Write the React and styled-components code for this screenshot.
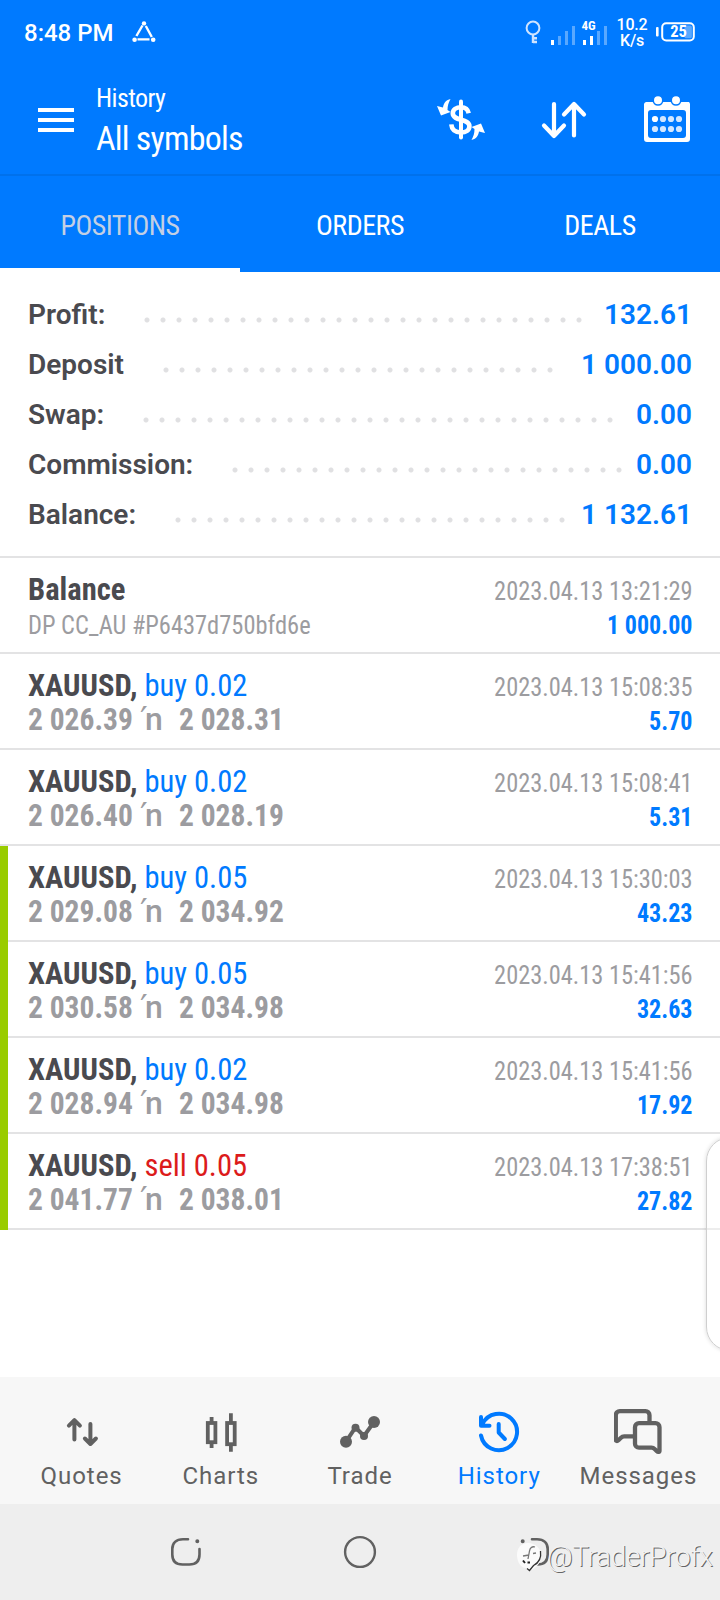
import React from 'react';
import styled, { createGlobalStyle } from 'styled-components';

const GlobalStyle = createGlobalStyle`
  * {
    box-sizing: border-box;
  }
  body {
    margin: 0;
    background: #fff;
    font-family: 'Roboto', sans-serif;
  }
`;

const condensed = "'Roboto Condensed', 'Roboto', sans-serif";

const Screen = styled.div`
  position: relative;
  display: flex;
  flex-direction: column;
  width: 720px;
  height: 1600px;
  overflow: hidden;
  background: #fff;
`;

const StatusBar = styled.div`
  display: flex;
  align-items: center;
  height: 64px;
  padding: 0 25px 0 24px;
  background: #007aff;
  color: #fff;
`;

const Clock = styled.div`
  width: 108px;
  font-size: 24px;
  font-weight: 500;
  line-height: 30px;
  white-space: nowrap;
  padding-top: 1px;
`;

const StatusIcons = styled.div`
  display: flex;
  align-items: center;
  margin-left: auto;
`;

const Speed = styled.div`
  width: 36px;
  margin: 1px 6px 0;
  font-size: 16px;
  font-weight: 500;
  line-height: 16px;
  letter-spacing: -0.2px;
  text-align: center;
`;

const Header = styled.header`
  display: flex;
  align-items: center;
  height: 112px;
  padding: 0 29px 0 38px;
  background: #007aff;
  border-bottom: 2px solid #0071ec;
  color: #fff;
`;

const Burger = styled.div`
  display: flex;
  flex-direction: column;
  gap: 6px;
  width: 36px;
  margin-top: 2px;

  span {
    height: 4px;
    background: #fff;
  }
`;

const Titles = styled.div`
  margin-left: 22px;
  font-family: ${condensed};
  white-space: nowrap;
`;

const Subtitle = styled.div`
  font-size: 26px;
  line-height: 34px;
  letter-spacing: -0.6px;
  margin-top: 4px;
`;

const Title = styled.div`
  font-size: 34px;
  line-height: 46px;
  letter-spacing: -0.8px;
`;

const Actions = styled.div`
  display: flex;
  gap: 55px;
  margin: 2px 0 0 auto;
`;

const Tabs = styled.nav`
  display: flex;
  height: 96px;
  background: #007aff;
`;

const Tab = styled.div`
  flex: 1;
  padding-top: 4px;
  border-bottom: 4px solid ${(p) => (p.$active ? '#fff' : '#007aff')};
  color: ${(p) => (p.$active ? '#c3cfe4' : '#fff')};
  font-family: ${condensed};
  font-size: 28px;
  line-height: 92px;
  letter-spacing: -0.5px;
  text-align: center;
`;

const Summary = styled.section`
  padding: 18px 28px 16px;
  border-bottom: 2px solid #e3e3e4;
`;

const SummaryRow = styled.div`
  display: flex;
  height: 50px;
  line-height: 50px;
  font-size: 28px;
  font-weight: 600;
  white-space: nowrap;
`;

const SummaryLabel = styled.div`
  color: #4a4a4f;
`;

const Dots = styled.div`
  width: ${(p) => p.$count * 16}px;
  height: 16px;
  margin: 22px 0 0 34px;
  background: radial-gradient(circle at 8px 8px, #e0e0e2 2px, transparent 3px) 0 0 / 16px 16px;
`;

const SummaryValue = styled.div`
  margin-left: auto;
  color: #007aff;
`;

const Marked = styled.div`
  border-left: 8px solid #99cc00;

  > div {
    padding-left: 20px;
  }
`;

const Deal = styled.div`
  display: flex;
  justify-content: space-between;
  height: 96px;
  padding: 13px 27px 0 28px;
  border-bottom: 2px solid #e3e3e4;
  font-family: ${condensed};
  white-space: nowrap;
`;

const DealName = styled.div`
  color: #4a4a4f;
  font-size: 32px;
  font-weight: 700;
  line-height: 36px;
  transform: scaleX(0.955);
  transform-origin: left;
`;

const Side = styled.span`
  color: ${(p) => (p.$sell ? '#dc1b1b' : '#007aff')};
  font-weight: 400;
`;

const Comment = styled.div`
  color: #9c9ca0;
  font-size: 26px;
  line-height: 36px;
  transform: scaleX(0.94);
  transform-origin: left;
`;

const Prices = styled.div`
  display: flex;
  color: #9c9ca0;
  font-size: 32px;
  font-weight: 700;
  line-height: 32px;
`;

const Price = styled.div`
  width: ${(p) => p.$width || 'auto'};
  transform: scaleX(0.922);
  transform-origin: left;
`;

const Arrow = styled.div`
  display: flex;
  width: 39px;
  font-family: 'Roboto', sans-serif;
  font-weight: 500;
`;

const Prime = styled.span`
  width: 5px;
  font-family: 'DejaVu Sans', sans-serif;
  font-size: 34px;
`;

const DealInfo = styled.div`
  padding-top: 2px;
  font-size: 26px;
  text-align: right;
`;

const Time = styled.div`
  color: #9c9ca0;
  line-height: 36px;
  transform: scaleX(0.938);
  transform-origin: right;
`;

const Amount = styled.div`
  color: #007aff;
  font-weight: 700;
  line-height: 32px;
  transform: scaleX(0.925);
  transform-origin: right;
`;

const SidePanel = styled.div`
  position: absolute;
  top: 1137px;
  right: -34px;
  width: 48px;
  height: 214px;
  border: 1px solid #cfcfcf;
  border-radius: 26px;
  background: rgba(255, 255, 255, 0.35);
  box-shadow: 0 0 4px rgba(0, 0, 0, 0.15);
`;

const BottomNav = styled.nav`
  display: flex;
  height: 127px;
  margin-top: auto;
  padding: 31px 12px 0;
  background: #f7f7f7;
`;

const NavItem = styled.div`
  display: flex;
  flex: 1;
  flex-direction: column;
  align-items: center;
  color: ${(p) => (p.$active ? '#007aff' : '#616161')};
  font-size: 24px;
  line-height: 30px;
  letter-spacing: 0.95px;

  svg {
    margin-bottom: 5px;
  }
`;

const SystemNav = styled.div`
  display: flex;
  justify-content: space-between;
  align-items: center;
  height: 96px;
  padding: 0 166px;
  background: #eee;
`;

const Watermark = styled.div`
  position: absolute;
  left: 514px;
  top: 1537px;
  display: flex;
  align-items: center;
  color: #f2f2f2;
  font-size: 28px;
  font-weight: 300;
  line-height: 40px;
  letter-spacing: -0.35px;
  text-shadow: 1px 1px 0 #666;

  svg {
    margin-right: -1px;
  }
`;

const summary = [
  { label: 'Profit:', value: '132.61', dots: 28 },
  { label: 'Deposit', value: '1 000.00', dots: 25 },
  { label: 'Swap:', value: '0.00', dots: 30 },
  { label: 'Commission:', value: '0.00', dots: 25 },
  { label: 'Balance:', value: '1 132.61', dots: 25 },
];

const deals = [
  { side: 'buy 0.02', open: '2 026.39', close: '2 028.31', time: '2023.04.13 15:08:35', profit: '5.70' },
  { side: 'buy 0.02', open: '2 026.40', close: '2 028.19', time: '2023.04.13 15:08:41', profit: '5.31' },
];

const takeProfitDeals = [
  { side: 'buy 0.05', open: '2 029.08', close: '2 034.92', time: '2023.04.13 15:30:03', profit: '43.23' },
  { side: 'buy 0.05', open: '2 030.58', close: '2 034.98', time: '2023.04.13 15:41:56', profit: '32.63' },
  { side: 'buy 0.02', open: '2 028.94', close: '2 034.98', time: '2023.04.13 15:41:56', profit: '17.92' },
  { side: 'sell 0.05', open: '2 041.77', close: '2 038.01', time: '2023.04.13 17:38:51', profit: '27.82' },
];

function DealRow({ deal }) {
  return (
    <Deal>
      <div>
        <DealName>
          XAUUSD, <Side $sell={deal.side.startsWith('sell')}>{deal.side}</Side>
        </DealName>
        <Prices>
          <Price $width="112px">{deal.open}</Price>
          <Arrow>
            <Prime>′</Prime>n
          </Arrow>
          <Price>{deal.close}</Price>
        </Prices>
      </div>
      <DealInfo>
        <Time>{deal.time}</Time>
        <Amount>{deal.profit}</Amount>
      </DealInfo>
    </Deal>
  );
}

const TriangleIcon = () => (
  <svg width="24" height="22" viewBox="0 0 24 22" fill="none" stroke="#fff" strokeWidth="2.4">
    <path d="M10.5 4.5 4.4 15M13.8 5l6 11M5.5 18.4h12" />
    <g fill="#fff" stroke="none">
      <circle cx="12" cy="2.4" r="2.2" />
      <circle cx="2.6" cy="18.8" r="2.3" />
      <circle cx="21.2" cy="18.8" r="2.3" />
    </g>
  </svg>
);

const KeyIcon = () => (
  <svg width="16" height="24" viewBox="0 0 16 24" fill="none" stroke="#cfe4ff" strokeWidth="2">
    <circle cx="8" cy="8" r="6.4" />
    <path d="M8 14.5V23M8 18.2h4M8 22h4" strokeWidth="2.4" />
  </svg>
);

const Signal = ({ level, network }) => (
  <svg width="25" height="28" viewBox="0 0 25 28" fill="#fff">
    <rect x="0" y="22" width="3" height="5" />
    <rect x="7" y="18" width="3" height="9" opacity={level > 1 ? 1 : 0.35} />
    <rect x="14" y="13" width="3" height="14" opacity="0.35" />
    <rect x="21" y="8" width="3" height="19" opacity="0.35" />
    {network && (
      <text x="-1.5" y="11.5" fontFamily="Roboto Condensed" fontSize="13" fontWeight="700">
        {network}
      </text>
    )}
  </svg>
);

const SignalSlot = styled.div`
  display: flex;
  margin-left: ${(p) => p.$gap};
  margin-bottom: 1px;

  svg {
    overflow: visible;
  }
`;

const BatteryIcon = () => (
  <svg width="39" height="20" viewBox="0 0 39 20" fill="none">
    <rect x="0" y="5" width="2.6" height="9.5" rx="1" fill="#fff" />
    <rect x="6.2" y="1.2" width="31.6" height="17.2" rx="4" stroke="#fff" strokeWidth="2" />
    <rect x="28.5" y="3.6" width="7.4" height="12.6" rx="1.5" fill="#5aa9ff" />
    <text x="22.5" y="15.4" fill="#fff" fontFamily="Roboto Condensed" fontSize="16.5" fontWeight="700" textAnchor="middle">
      25
    </text>
  </svg>
);

const DollarIcon = () => (
  <svg width="48" height="48" viewBox="0 0 48 48" fill="none" stroke="#fff" strokeWidth="4.6">
    <path d="M24 5.5v36" strokeWidth="4" strokeLinecap="round" />
    <path d="M31.7 17.2c-.8-4-4-6-7.700-6-4.600 0-8.200 2.300-8.200 6.100 0 8.300 16.600 4.700 16.600 12.900 0 4-3.600 6.200-8.400 6.200-5.500 0-9.200-2.600-9.700-8" />
    <g fill="#fff" stroke="none">
      <path d="M13.500 3c-4 .8-7 4-7.500 8.500L0 10l4 9.500 9.500-3.500-3-2c0-4 1-7.500 3-11z" />
      <path d="M34.500 44c4-.8 7-4 7.500-8.500l6 1.500-4-9.500-9.500 3.500 3 2c0 4-1 7.500-3 11z" />
    </g>
  </svg>
);

const SortIcon = () => (
  <svg width="48" height="48" viewBox="0 0 48 48" fill="none" stroke="#fff" strokeWidth="4.2" strokeLinecap="round" strokeLinejoin="round">
    <path d="M14 8v32M4 29.500l10 10.500 10-10.500" />
    <path d="M34 39.500V9M24 18.500 34 8 44 18.500" />
  </svg>
);

const CalendarIcon = () => (
  <svg width="48" height="48" viewBox="0 0 48 48">
    <path
      fill="#fff"
      fillRule="evenodd"
      d="M3 6h43a3 3 0 0 1 1 2v35a3 3 0 0 1-3 3H4a3 3 0 0 1-3-3V8a3 3 0 0 1 2-2zM8 14a3 3 0 0 0-3 3v22a3 3 0 0 0 3 3h32a3 3 0 0 0 3-3V17a3 3 0 0 0-3-3z"
    />
    <g fill="#fff" stroke="#007aff" strokeWidth="1.6">
      <circle cx="15" cy="4.2" r="4.8" />
      <circle cx="33" cy="4.2" r="4.8" />
    </g>
    {[23, 33].map((y) =>
      [12, 20, 28, 36].map((x) => (
        <circle key={`${x}-${y}`} cx={x} cy={y} r="3.1" fill={x === 12 && y === 23 ? '#fff' : '#d3e7ff'} />
      ))
    )}
  </svg>
);

const QuotesIcon = () => (
  <svg width="48" height="48" viewBox="0 0 48 48" fill="none" stroke="currentColor" strokeWidth="4" strokeLinecap="round" strokeLinejoin="round">
    <path d="M16.400 31.500V12.500M10.900 17.700l5.500-5.500 5.500 5.500" />
    <path d="M32.400 16v19.500M26.900 30.500l5.500 5.500 5.500-5.500" />
  </svg>
);

const ChartsIcon = () => (
  <svg width="48" height="48" viewBox="0 0 48 48" fill="none" stroke="currentColor" strokeWidth="3.8">
    <rect x="10.8" y="15" width="7.6" height="19.2" />
    <rect x="30.1" y="15" width="7.6" height="21.2" />
    <path d="M14.600 9v5M14.600 35v5M33.900 5.300V14M33.900 37v6.700" />
  </svg>
);

const TradeIcon = () => (
  <svg width="48" height="48" viewBox="0 0 48 48" fill="currentColor">
    <path d="M10 33.700 19.500 19.500 28 28 38 14" fill="none" stroke="currentColor" strokeWidth="4" />
    <circle cx="10" cy="33.7" r="6" />
    <circle cx="19.5" cy="19.8" r="4" />
    <circle cx="28" cy="28" r="4" />
    <circle cx="38" cy="14" r="6" />
  </svg>
);

const HistoryIcon = () => (
  <svg width="48" height="48" viewBox="0 0 48 48" fill="none" stroke="currentColor" strokeWidth="4" strokeLinecap="round" strokeLinejoin="round">
    <path d="M6 27.500a18.200 18.200 0 1 0 1.500-11.500" />
    <path d="M6 9v8.700h8.500" />
    <path d="M23.700 16v8.500l6.200 6.500" />
  </svg>
);

const MessagesIcon = () => (
  <svg width="48" height="48" viewBox="0 0 48 48" fill="none" stroke="currentColor" strokeWidth="4.3" strokeLinecap="round" strokeLinejoin="round">
    <path d="M35.500 14V7.200a4 4 0 0 0-4-4H5.800a4 4 0 0 0-4 4v24.600c0 1.500 1.500 1.500 2.600.4l2.300-2.300c1-1 2-1.600 3.500-1.600H20" />
    <path d="M26 15.200h15.500a4 4 0 0 1 4 4v23.500c0 1.500-1.600 1.600-2.600.6l-2-2c-1.100-1.100-2-1.600-3.400-1.600H25a4 4 0 0 1-4-4V19.200a4 4 0 0 1 4-4z" />
  </svg>
);

const SquareIcon = ({ mirrored }) => (
  <svg width="40" height="40" viewBox="0 0 40 40" fill="none" stroke="#616161" strokeWidth="2.6" strokeLinecap="round">
    <g transform={mirrored ? 'translate(40 0) scale(-1 1)' : undefined}>
      <path d="M22 7.300h-5C10 7.300 6.300 11 6.300 17v5.500c0 6.500 3.700 10 10.200 10h6.800c6.500 0 10.200-3.500 10.200-10V17" />
      <circle cx="31.3" cy="9.3" r="1" strokeWidth="2" fill="#616161" />
    </g>
  </svg>
);

const HomeIcon = () => (
  <svg width="40" height="40" viewBox="0 0 40 40" fill="none" stroke="#616161" strokeWidth="2.4">
    <circle cx="20" cy="20" r="14.9" />
  </svg>
);

const WatermarkLogo = () => (
  <svg width="34" height="40" viewBox="0 0 34 40" fill="none">
    <path d="M14 6C7 6 3 11 3 18s4 13 9 13l3 3c6-2 12-7 12-15 0-8-6-13-13-13z" fill="#fbfbfb" />
    <path d="M21 10c-3-1-5 1-5.500 4L14 22M9 19l6-1M19 16.500l3-.5" stroke="#777" strokeWidth="1.3" />
    <path d="M9 23.500l2 2.500M13.500 25.500h2.500" stroke="#222" strokeWidth="2" />
    <path d="M26.500 14c1 7-2 12-7 14.500l-4 5-2.500-2" stroke="#333" strokeWidth="1.3" />
  </svg>
);

const navItems = [
  { label: 'Quotes', Icon: QuotesIcon },
  { label: 'Charts', Icon: ChartsIcon },
  { label: 'Trade', Icon: TradeIcon },
  { label: 'History', Icon: HistoryIcon, active: true },
  { label: 'Messages', Icon: MessagesIcon },
];

function App() {
  return (
    <Screen>
      <GlobalStyle />
      <StatusBar>
        <Clock>8:48 PM</Clock>
        <TriangleIcon />
        <StatusIcons>
          <KeyIcon />
          <SignalSlot $gap="10px">
            <Signal level={1} />
          </SignalSlot>
          <SignalSlot $gap="7px">
            <Signal level={2} network="4G" />
          </SignalSlot>
          <Speed>
            10.2
            <br />
            K/s
          </Speed>
          <BatteryIcon />
        </StatusIcons>
      </StatusBar>

      <Header>
        <Burger>
          <span />
          <span />
          <span />
        </Burger>
        <Titles>
          <Subtitle>History</Subtitle>
          <Title>All symbols</Title>
        </Titles>
        <Actions>
          <DollarIcon />
          <SortIcon />
          <CalendarIcon />
        </Actions>
      </Header>

      <Tabs>
        <Tab $active>POSITIONS</Tab>
        <Tab>ORDERS</Tab>
        <Tab>DEALS</Tab>
      </Tabs>

      <Summary>
        {summary.map((row) => (
          <SummaryRow key={row.label}>
            <SummaryLabel>{row.label}</SummaryLabel>
            <Dots $count={row.dots} />
            <SummaryValue>{row.value}</SummaryValue>
          </SummaryRow>
        ))}
      </Summary>

      <Deal>
        <div>
          <DealName>Balance</DealName>
          <Comment>DP CC_AU #P6437d750bfd6e</Comment>
        </div>
        <DealInfo>
          <Time>2023.04.13 13:21:29</Time>
          <Amount>1 000.00</Amount>
        </DealInfo>
      </Deal>
      {deals.map((deal) => (
        <DealRow key={deal.time} deal={deal} />
      ))}
      <Marked>
        {takeProfitDeals.map((deal) => (
          <DealRow key={deal.open} deal={deal} />
        ))}
      </Marked>

      <BottomNav>
        {navItems.map(({ label, Icon, active }) => (
          <NavItem key={label} $active={active}>
            <Icon />
            {label}
          </NavItem>
        ))}
      </BottomNav>

      <SystemNav>
        <SquareIcon />
        <HomeIcon />
        <SquareIcon mirrored />
      </SystemNav>

      <SidePanel />
      <Watermark>
        <WatermarkLogo />
        @TraderProfx
      </Watermark>
    </Screen>
  );
}

export default App;
